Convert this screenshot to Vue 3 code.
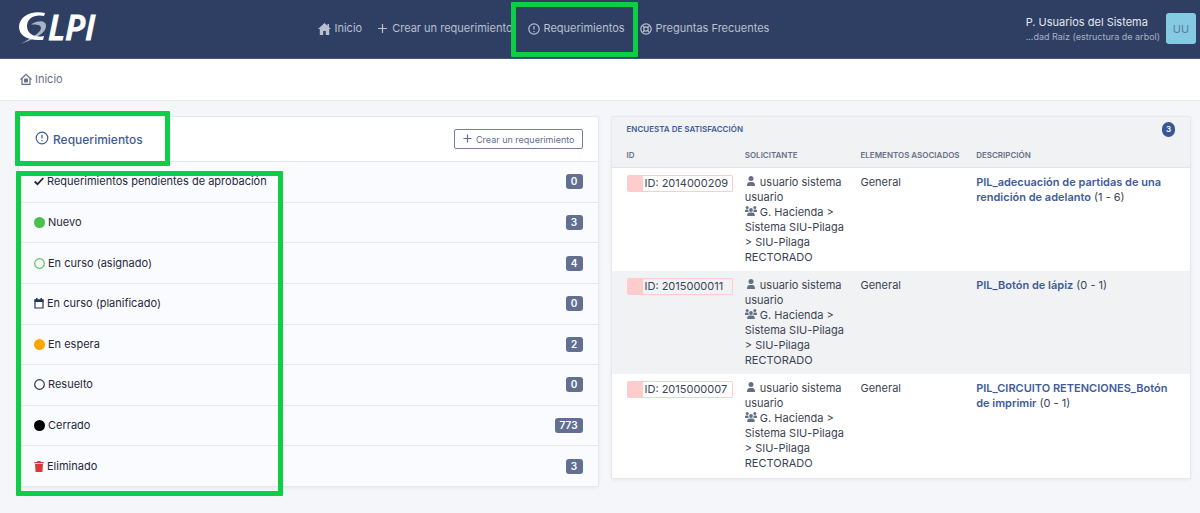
<script setup>
const states = [
  { label: 'Requerimientos pendientes de aprobación', count: 0, icon: 'check' },
  { label: 'Nuevo', count: 3, icon: 'dot', tone: 'green' },
  { label: 'En curso (asignado)', count: 4, icon: 'ring', tone: 'green-line' },
  { label: 'En curso (planificado)', count: 0, icon: 'calendar' },
  { label: 'En espera', count: 2, icon: 'dot', tone: 'orange' },
  { label: 'Resuelto', count: 0, icon: 'ring', tone: 'dark-line' },
  { label: 'Cerrado', count: 773, icon: 'dot', tone: 'black' },
  { label: 'Eliminado', count: 3, icon: 'trash' },
]
const surveys = [
  { id: '2014000209', title: 'PIL_adecuación de partidas de una rendición de adelanto', range: '(1 - 6)' },
  { id: '2015000011', title: 'PIL_Botón de lápiz', range: '(0 - 1)' },
  { id: '2015000007', title: 'PIL_CIRCUITO RETENCIONES_Botón de imprimir', range: '(0 - 1)' },
]
</script>

<template>
  <div class="page">
    <header class="topbar">
      <a href="#" class="brand" aria-label="GLPI">
        <svg width="96" height="56" viewBox="0 0 96 56">
          <path d="M13 23.500C20 19 28 19 28 25C28 33 15 38 3 43C12 37 23 32 23 27C23 24 19 23 13 23.500Z" fill="#a9b2c6" />
          <path d="M27 12C14 9 1 15 1 26C1 34 9 39 20 39H25L26 35C17 37 9 33 9 25C9 17 17 13 26 15Z" fill="#fff" />
          <text x="30" y="39" class="brand-text">LPI</text>
        </svg>
      </a>
      <nav class="menu">
        <a href="#">
          <svg width="13" height="12" viewBox="0 0 13 12"><path d="M6.500 0L0 6H1.800V12H5.200V8H7.800V12H11.200V6H13L11 4.200V1H9.500V2.800Z" fill="currentColor" /></svg>
          Inicio
        </a>
        <a href="#">
          <svg width="11" height="11" viewBox="0 0 11 11"><path d="M5.500 1V10M1 5.500H10" class="line" /></svg>
          Crear un requerimiento
        </a>
        <a href="#">
          <svg width="12" height="12" viewBox="0 0 12 12"><circle cx="6" cy="6" r="5.200" class="line" /><path d="M6 3V6.500M6 8V9.200" class="line" /></svg>
          Requerimientos
          <span class="mark mark-nav"></span>
        </a>
        <a href="#">
          <svg width="12" height="12" viewBox="0 0 12 12"><circle cx="6" cy="6" r="5.200" class="line" /><circle cx="6" cy="6" r="2.200" class="line" /><path d="M2.300 2.300L4.400 4.400M9.700 2.300L7.600 4.400M2.300 9.700L4.400 7.600M9.700 9.700L7.600 7.600" class="line" /></svg>
          Preguntas Frecuentes
        </a>
      </nav>
      <div class="user">
        <div class="who">
          <span>P. Usuarios del Sistema</span>
          <small>...dad Raíz (estructura de arbol)</small>
        </div>
        <button type="button" class="avatar">UU</button>
      </div>
    </header>

    <div class="crumbs">
      <a href="#">
        <svg width="12" height="14" viewBox="0 0 12 14"><path d="M.5 6.500L6 1.300L11.500 6.500M2 5.500V11.400H10V5.500" class="line" /><rect x="4" y="5.500" width="4" height="4" rx="1" fill="currentColor" /></svg>
        Inicio
      </a>
    </div>

    <main class="content">
      <section class="card tickets">
        <div class="card-head">
          <h2>
            <svg width="14" height="16" viewBox="0 0 14 16"><circle cx="7" cy="7" r="5.800" class="line" /><path d="M7 3.800V7.600M7 9V10.200" class="line" /></svg>
            Requerimientos
          </h2>
          <button type="button" class="create">
            <svg width="9" height="11" viewBox="0 0 9 11"><path d="M4.500 .5V8.500M.5 4.500H8.500" class="line" /></svg>
            Crear un requerimiento
          </button>
          <span class="mark mark-head"></span>
        </div>
        <ul class="states">
          <li v-for="s in states" :key="s.label">
            <a href="#">
              <svg v-if="s.icon === 'check'" width="10" height="10" viewBox="0 0 10 10"><path d="M.7 4.500L3.500 7.200L9.300 1" fill="none" stroke="#1e293b" stroke-width="1.800" /></svg>
              <svg v-else-if="s.icon === 'calendar'" width="10" height="11" viewBox="0 0 10 11"><path d="M1 2H9V10H1Z" fill="none" stroke="#25335a" stroke-width="1.200" /><path d="M.5 1.500H9.500V4H.5ZM2 0H3.500V2H2ZM6.500 0H8V2H6.500Z" fill="#25335a" /></svg>
              <svg v-else-if="s.icon === 'trash'" width="10" height="11" viewBox="0 0 10 11"><path d="M.3 1H3L3.600 0H6.400L7 1H9.700V2.200H.3ZM1 3H9L8.400 11H1.600Z" fill="#d63939" /></svg>
              <svg v-else-if="s.icon === 'ring'" width="11" height="11" viewBox="0 0 11 11"><circle cx="5.500" cy="5.500" r="4.800" class="line" :class="s.tone" /></svg>
              <span v-else class="state-dot" :class="s.tone"></span>
              {{ s.label }}
            </a>
            <span class="count">{{ s.count }}</span>
          </li>
          <li class="mark mark-list" aria-hidden="true"></li>
        </ul>
      </section>

      <section class="card survey">
        <div class="survey-head">
          <a href="#">Encuesta de satisfacción</a>
          <span class="pill">3</span>
        </div>
        <table>
          <thead>
            <tr>
              <th class="c-id">ID</th>
              <th class="c-mid">Solicitante</th>
              <th class="c-mid">Elementos asociados</th>
              <th>Descripción</th>
            </tr>
          </thead>
          <tbody>
            <tr v-for="r in surveys" :key="r.id">
              <td><div class="ticket-id">ID: {{ r.id }}</div></td>
              <td>
                <svg width="12" height="10" viewBox="0 0 12 10"><circle cx="6" cy="2.500" r="2.500" fill="#667085" /><path d="M2 10C2 7 3 6 4.500 6H7.500C9 6 10 7 10 10Z" fill="#667085" /></svg>
                usuario sistema usuario<br>
                <svg width="12" height="10" viewBox="0 0 12 10"><g fill="#667085"><circle cx="2.200" cy="1.500" r="1.500" /><circle cx="9.800" cy="1.500" r="1.500" /><circle cx="6" cy="4" r="1.900" /><path d="M0 6V5C0 4 .6 3.600 1.500 3.600H3.200L3.800 6ZM12 6V5C12 4 11.400 3.600 10.500 3.600H8.800L8.200 6ZM2.200 10C2.200 7.500 3 6.600 4.500 6.600H7.500C9 6.600 9.800 7.500 9.800 10Z" /></g></svg>
                G. Hacienda &gt; Sistema SIU-Pilaga &gt; SIU-Pilaga RECTORADO
              </td>
              <td>General</td>
              <td><a href="#">{{ r.title }}</a> {{ r.range }}</td>
            </tr>
          </tbody>
        </table>
      </section>
    </main>
  </div>
</template>

<style>
body { margin: 0; background: #f4f6fa; }
</style>

<style scoped>
* { box-sizing: border-box; }
.page {
  min-height: 100vh;
  background: #f4f6fa;
  color: #1e293b;
  font: 11px/15px Inter, "Liberation Sans", sans-serif;
}
a { color: inherit; text-decoration: none; }
button { font-family: inherit; cursor: pointer; }
svg { flex: none; }
.line { fill: none; stroke: currentColor; stroke-width: 1.2; }

.topbar {
  display: grid;
  grid-template-columns: 25% 1fr auto;
  align-items: center;
  height: 59px;
  padding: 0 4px 1px 18px;
  background: #2f3f64;
  border-bottom: 1px solid #475577;
}
.brand { display: flex; }
.brand-text {
  font: italic 600 34px "Liberation Sans Narrow", "Open Sans", sans-serif;
  fill: #fff;
  stroke: #fff;
  stroke-width: 1px;
}
.menu { display: flex; gap: 15px; padding-left: 5px; color: #b9c0cf; }
.menu a { position: relative; display: flex; align-items: center; gap: 4px; white-space: nowrap; }
.user { display: flex; align-items: center; gap: 6px; }
.who { display: flex; flex-direction: column; color: #e3e7ef; }
.who small { font-size: 9px; line-height: 13px; color: #a9b1c3; }
.avatar {
  width: 30px;
  height: 31px;
  padding: 0;
  border: 0;
  border-radius: 3px;
  background: #84cbe2;
  color: #5f7d92;
  font-size: 11px;
}

.crumbs {
  display: flex;
  align-items: center;
  height: 42px;
  padding: 0 20px;
  background: #fff;
  border-bottom: 1px solid #e6e9ee;
  color: #667085;
}
.crumbs a { display: flex; align-items: center; gap: 3px; }

.content {
  display: grid;
  grid-template-columns: 1fr 1fr;
  align-items: start;
  gap: 12px;
  padding: 15px 9px 16px 18px;
}
.card {
  background: #fff;
  border: 1px solid #e6e8eb;
  border-radius: 2px;
  box-shadow: 0 1px 3px rgba(30, 41, 59, 0.06);
}
.card-head {
  position: relative;
  z-index: 1;
  display: flex;
  align-items: center;
  justify-content: space-between;
  height: 44px;
  padding: 0 15px 0 16px;
}
.card-head h2 {
  display: flex;
  align-items: center;
  gap: 4px;
  margin: 0;
  font-size: 12px;
  font-weight: 500;
  color: #3f5c9a;
}
.create {
  display: flex;
  align-items: center;
  gap: 4px;
  height: 20px;
  padding: 0 7px 0 8px;
  background: #fff;
  border: 1px solid #7481a1;
  border-radius: 2px;
  color: #626f91;
  font-size: 9px;
}
.states {
  position: relative;
  display: flex;
  flex-direction: column;
  min-height: 325px;
  margin: 0;
  padding: 0;
  list-style: none;
  background: #fafbfe;
}
.states li:not(.mark) {
  flex: 1;
  display: flex;
  align-items: center;
  justify-content: space-between;
  padding: 0 15px;
  border-top: 1px solid #e6e8eb;
}
.states a { display: flex; align-items: center; gap: 3px; }
.state-dot { width: 11px; height: 11px; border-radius: 50%; }
.green { background: #49bf4d; }
.orange { background: #ffa500; }
.black { background: #000; }
.green-line { color: #5cc561; }
.dark-line { color: #2c3442; }
.count {
  min-width: 17px;
  padding: 0 5px;
  border-radius: 3px;
  background: #626f91;
  color: #fff;
  font-size: 10px;
  font-weight: 600;
  text-align: center;
}

.survey { padding-bottom: 1px; }
.survey-head {
  display: flex;
  align-items: center;
  justify-content: space-between;
  height: 25px;
  padding: 0 15px;
  background: #f1f2f4;
  color: #3f5c9a;
  font-size: 8px;
  font-weight: 600;
  text-transform: uppercase;
}
.pill {
  padding: 0 4px;
  border-radius: 8px;
  background: #3a5693;
  color: #fff;
}
table { width: 100%; table-layout: fixed; border-collapse: collapse; }
th {
  height: 25px;
  padding: 2px 6px 0;
  background: #f1f2f4;
  border-bottom: 1px solid #e0e3e7;
  color: #667085;
  font-size: 8px;
  font-weight: 600;
  text-align: left;
  text-transform: uppercase;
  white-space: nowrap;
}
td { padding: 7px 6px 6px; vertical-align: top; color: #3b4453; }
th:first-child, td:first-child { padding-left: 15px; }
td:last-child { padding-right: 15px; }
.c-id { width: 22%; }
.c-mid { width: 20%; }
tbody tr:nth-child(even) { background: #f1f2f4; }
td a { color: #3f5c9a; font-weight: 600; }
.ticket-id {
  border: 1px solid #ffcccc;
  border-left-width: 16px;
  border-radius: 2px;
  padding-left: 2px;
  white-space: nowrap;
}

.mark {
  position: absolute;
  border: 5px solid #0dce47;
  border-radius: 1px;
  pointer-events: none;
}
.mark-nav { inset: -19px -13px -21px -17px; }
.mark-head { top: -6px; bottom: -5px; left: -4px; width: 155px; }
.mark-list { top: 10px; bottom: -10px; left: -3px; width: 267px; }
</style>
